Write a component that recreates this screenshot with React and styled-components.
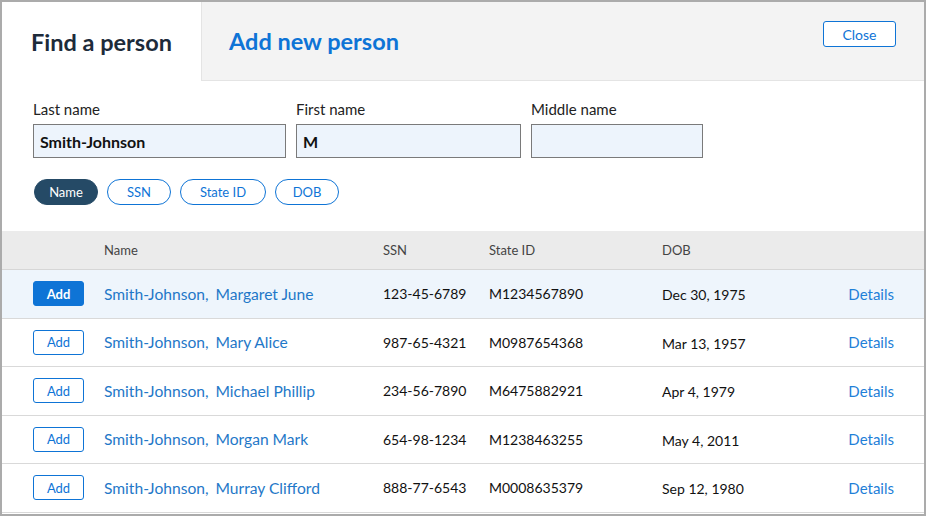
import React from "react";
import styled, { createGlobalStyle } from "styled-components";

const GlobalStyle = createGlobalStyle`
  html, body {
    margin: 0;
    padding: 0;
    background: #ffffff;
  }
  body {
    font-family: "Lato", "Liberation Sans", sans-serif;
    color: #1a1a1a;
  }
  * {
    box-sizing: border-box;
  }
`;

const Frame = styled.div`
  width: 926px;
  height: 516px;
  border: 2px solid #ababab;
  background: #ffffff;
  display: flex;
  flex-direction: column;
  overflow: hidden;
`;

const TabBar = styled.div`
  display: flex;
  height: 79px;
  flex-shrink: 0;
`;

const ActiveTab = styled.div`
  width: 199px;
  display: flex;
  align-items: center;
  padding-left: 29px;
  font-size: 23.5px;
  font-weight: 700;
  color: #1d2b3a;
  background: #ffffff;
`;

const TabRest = styled.div`
  flex: 1;
  display: flex;
  align-items: center;
  justify-content: space-between;
  background: #f3f3f3;
  border-left: 1px solid #e4e4e4;
  border-bottom: 1px solid #e4e4e4;
  padding: 0 28px 0 27px;
`;

const TabLink = styled.span`
  font-size: 23.5px;
  font-weight: 700;
  color: #0e74d6;
`;

const CloseButton = styled.button`
  align-self: flex-start;
  margin-top: 19px;
  width: 73px;
  height: 26px;
  border: 1px solid #0e74d6;
  border-radius: 3px;
  background: #ffffff;
  color: #0e74d6;
  font-family: inherit;
  font-size: 14px;
  padding: 0;
`;

const SearchForm = styled.div`
  padding: 18px 31px 26px;
`;

const FieldRow = styled.div`
  display: flex;
  gap: 10px;
`;

const Field = styled.label`
  display: flex;
  flex-direction: column;
  width: ${(p) => p.width}px;
`;

const FieldLabel = styled.span`
  font-size: 15px;
  line-height: 20px;
  color: #222222;
  margin-bottom: 5px;
`;

const TextBox = styled.div`
  height: 34px;
  border: 1px solid #7a7a7a;
  background: #edf4fc;
  display: flex;
  align-items: center;
  padding: 0 6px;
  font-size: 16px;
  font-weight: 700;
  color: #111111;
`;

const PillRow = styled.div`
  display: flex;
  gap: 9px;
  margin-top: 21px;
  padding-left: 1px;
`;

const Pill = styled.button`
  height: 26px;
  width: ${(p) => p.width || 64}px;
  padding: 0;
  border-radius: 13px;
  border: 1px solid ${(p) => (p.active ? "#254a66" : "#0e74d6")};
  background: ${(p) => (p.active ? "#254a66" : "#ffffff")};
  color: ${(p) => (p.active ? "#ffffff" : "#0e74d6")};
  font-family: inherit;
  font-size: 13px;
`;

const Table = styled.div`
  display: flex;
  flex-direction: column;
`;

const cols = "102px 279px 106px 173px 1fr auto";

const HeaderRow = styled.div`
  display: grid;
  grid-template-columns: ${cols};
  align-items: center;
  height: 39px;
  background: #ebebeb;
  border-bottom: 1px solid #d6d6d6;
  padding-right: 30px;
  font-size: 13px;
  color: #444444;
`;

const Row = styled.div`
  display: grid;
  grid-template-columns: ${cols};
  align-items: center;
  height: 48.5px;
  background: ${(p) => (p.selected ? "#eef5fc" : "#ffffff")};
  border-bottom: 1px solid #d9d9d9;
  padding-right: 30px;
  font-size: 14px;
  color: #111111;
`;

const AddButton = styled.button`
  margin-left: 31px;
  width: 51px;
  height: 25px;
  border-radius: 3px;
  border: 1px solid #0e74d6;
  background: ${(p) => (p.primary ? "#0e74d6" : "#ffffff")};
  color: ${(p) => (p.primary ? "#ffffff" : "#0e74d6")};
  font-family: inherit;
  font-size: 13px;
  font-weight: ${(p) => (p.primary ? 700 : 400)};
  padding: 0;
`;

const NameLink = styled.span`
  font-size: 15.6px;
  color: #1f78c8;
  span + span {
    margin-left: 7px;
  }
`;

const DateCell = styled.span`
  padding-top: 2px;
`;

const DetailsLink = styled.span`
  color: #1f80d8;
  font-size: 15px;
`;

const people = [
  { first: "Margaret June", ssn: "123-45-6789", sid: "M1234567890", dob: "Dec 30, 1975" },
  { first: "Mary Alice", ssn: "987-65-4321", sid: "M0987654368", dob: "Mar 13, 1957" },
  { first: "Michael Phillip", ssn: "234-56-7890", sid: "M6475882921", dob: "Apr 4, 1979" },
  { first: "Morgan Mark", ssn: "654-98-1234", sid: "M1238463255", dob: "May 4, 2011" },
  { first: "Murray Clifford", ssn: "888-77-6543", sid: "M0008635379", dob: "Sep 12, 1980" },
];

export default function App() {
  return (
    <>
      <GlobalStyle />
      <Frame>
        <TabBar>
          <ActiveTab>Find a person</ActiveTab>
          <TabRest>
            <TabLink>Add new person</TabLink>
            <CloseButton>Close</CloseButton>
          </TabRest>
        </TabBar>

        <SearchForm>
          <FieldRow>
            <Field width={253}>
              <FieldLabel>Last name</FieldLabel>
              <TextBox>Smith-Johnson</TextBox>
            </Field>
            <Field width={225}>
              <FieldLabel>First name</FieldLabel>
              <TextBox>M</TextBox>
            </Field>
            <Field width={172}>
              <FieldLabel>Middle name</FieldLabel>
              <TextBox />
            </Field>
          </FieldRow>
          <PillRow>
            <Pill active>Name</Pill>
            <Pill>SSN</Pill>
            <Pill width={86}>State ID</Pill>
            <Pill>DOB</Pill>
          </PillRow>
        </SearchForm>

        <Table>
          <HeaderRow>
            <span />
            <span>Name</span>
            <span>SSN</span>
            <span>State ID</span>
            <span>DOB</span>
            <span />
          </HeaderRow>
          {people.map((p, i) => (
            <Row key={p.ssn} selected={i === 0}>
              <div>
                <AddButton primary={i === 0}>Add</AddButton>
              </div>
              <NameLink>
                <span>Smith-Johnson,</span>
                <span>{p.first}</span>
              </NameLink>
              <span>{p.ssn}</span>
              <span>{p.sid}</span>
              <DateCell>{p.dob}</DateCell>
              <DetailsLink>Details</DetailsLink>
            </Row>
          ))}
        </Table>
      </Frame>
    </>
  );
}
